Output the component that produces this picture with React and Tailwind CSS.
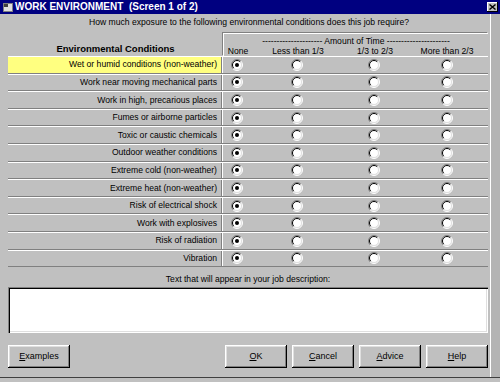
import React, { useState } from "react";

const conditions = [
  "Wet or humid conditions (non-weather)",
  "Work near moving mechanical parts",
  "Work in high, precarious places",
  "Fumes or airborne particles",
  "Toxic or caustic chemicals",
  "Outdoor weather conditions",
  "Extreme cold (non-weather)",
  "Extreme heat (non-weather)",
  "Risk of electrical shock",
  "Work with explosives",
  "Risk of radiation",
  "Vibration",
];

const Radio = ({ checked, onClick }) => (
  <svg width="12" height="12" viewBox="0 0 12 12" onClick={onClick} className="cursor-pointer">
    <circle cx="6" cy="6" r="5" fill="#fff" />
    <path d="M2.1 9.9 A5.5 5.5 0 0 1 9.9 2.1" stroke="#808080" fill="none" />
    <path d="M9.9 2.1 A5.5 5.5 0 0 1 2.1 9.9" stroke="#fff" fill="none" />
    <path d="M2.8 9.2 A4.5 4.5 0 0 1 9.2 2.8" stroke="#000" fill="none" />
    <path d="M9.2 2.8 A4.5 4.5 0 0 1 2.8 9.2" stroke="#dfdfdf" fill="none" />
    {checked && <circle cx="6" cy="6" r="2" fill="#000" />}
  </svg>
);

const Button = ({ children, className = "" }) => (
  <button
    className={`h-[23px] w-[62px] bg-[#c0c0c0] text-[9px] text-black shadow-[inset_-1px_-1px_#000,inset_1px_1px_#fff,inset_-2px_-2px_#808080,inset_2px_2px_#dfdfdf] ${className}`}
  >
    {children}
  </button>
);

const App = () => {
  const [answers, setAnswers] = useState(conditions.map(() => 0));

  const pick = (row, col) => {
    setAnswers((prev) => prev.map((v, i) => (i === row ? col : v)));
  };

  return (
    <div className="w-[500px] h-[382px] overflow-hidden bg-[#c0c0c0] font-['Liberation_Sans',Arial,sans-serif] text-[8.6px] text-black flex flex-col">
      {/* Title bar */}
      <div className="h-[14px] bg-[#000080] flex items-center pl-[3px] pr-[2px] text-white">
        <svg width="10" height="9" viewBox="0 0 10 9" className="mr-[2px]">
          <rect x="0.5" y="0.5" width="9" height="8" fill="#dfdfdf" stroke="#808080" />
          <rect x="1" y="1" width="4" height="3" fill="#404040" />
        </svg>
        <span className="font-bold text-[10px] leading-none whitespace-pre">WORK ENVIRONMENT  (Screen 1 of 2)</span>
        <div className="ml-auto w-[11px] h-[10px] bg-[#c0c0c0] flex items-center justify-center shadow-[inset_-1px_-1px_#000,inset_1px_1px_#fff]">
          <svg width="7" height="6" viewBox="0 0 7 6">
            <path d="M0.5 0.5 L6.5 5.5 M6.5 0.5 L0.5 5.5" stroke="#000" strokeWidth="1.4" />
          </svg>
        </div>
      </div>

      <div className="flex-1 flex">
        <div className="w-[491px] flex flex-col pl-[8px] pr-[2px] border-r border-white">
          {/* Question */}
          <div className="h-[19px] pt-[3px] text-center leading-[11px] pl-[2px]">
            How much exposure to the following environmental conditions does this job require?
          </div>

          {/* Column header */}
          <div className="h-[23px] flex">
            <div className="w-[215px] flex items-end justify-center pb-[3px] font-bold text-[9.5px] leading-none">
              Environmental Conditions
            </div>
            <div className="flex-1 border-t border-l border-white shadow-[-1px_-1px_#808080] flex flex-col">
              <div className="text-center leading-[10px] pt-[2px] whitespace-pre">
                --------------------- Amount of Time ----------------------
              </div>
              <div className="grid grid-cols-[28px_92px_62px_1fr] leading-[11px]">
                <span className="text-center">None</span>
                <span className="text-center">Less than 1/3</span>
                <span className="text-center">1/3 to 2/3</span>
                <span className="text-center">More than 2/3</span>
              </div>
            </div>
          </div>

          {/* Rows */}
          <div className="flex flex-col">
            {conditions.map((label, r) => (
              <div key={label} className="h-[17.6px] flex border-t border-white border-b border-b-[#808080]">
                <div
                  className={`w-[214px] flex items-center justify-end pr-[4px] border-r border-[#808080] ${
                    r === 0 ? "bg-[#ffff80]" : ""
                  }`}
                >
                  {label}
                </div>
                <div className="flex-1 border-l border-white grid grid-cols-[28px_92px_62px_1fr] items-center">
                  {[0, 1, 2, 3].map((c) => (
                    <div key={c} className="flex justify-center">
                      <Radio checked={answers[r] === c} onClick={() => pick(r, c)} />
                    </div>
                  ))}
                </div>
              </div>
            ))}
          </div>

          {/* Description */}
          <div className="pt-[7px] text-center leading-[11px]">Text that will appear in your job description:</div>
          <textarea className="mt-[2px] h-[46px] w-full bg-white resize-none outline-none shadow-[inset_1px_1px_#808080,inset_2px_2px_#000,inset_-1px_-1px_#fff,inset_-2px_-2px_#dfdfdf]" />

          {/* Buttons */}
          <div className="mt-[12px] flex items-center">
            <Button>
              <u>E</u>xamples
            </Button>
            <div className="ml-auto flex gap-[5px]">
              <Button>
                <u>O</u>K
              </Button>
              <Button className="w-[61px]">
                <u>C</u>ancel
              </Button>
              <Button className="w-[61px]">
                <u>A</u>dvice
              </Button>
              <Button className="w-[61px]">
                <u>H</u>elp
              </Button>
            </div>
          </div>
        </div>
        <div className="flex-1 bg-[#b4b4b4]" />
      </div>
      <div className="h-[5px] border-t border-[#404040]" />
    </div>
  );
};

export default App;
